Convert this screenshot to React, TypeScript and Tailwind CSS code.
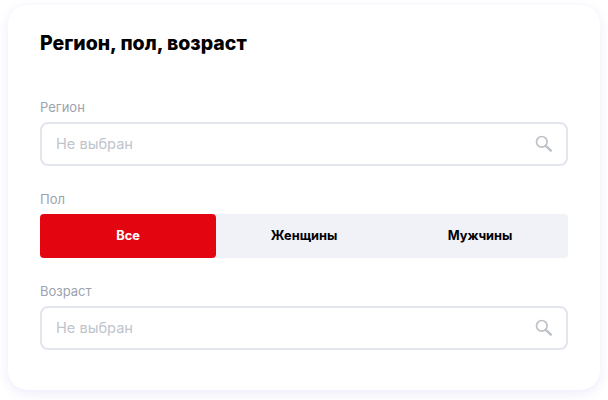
import React from 'react';

const font = "[font-family:Inter,'Noto_Sans',sans-serif]";

function SearchIcon() {
  return (
    <svg width="18" height="18" viewBox="0 0 18 18" fill="none" className="shrink-0 mr-[-1px]">
      <circle cx="6.8" cy="6.8" r="5.3" stroke="#bcc0c7" strokeWidth="1.7" />
      <path d="M10.8 10.8L16.6 16.4" stroke="#bcc0c7" strokeWidth="2.3" />
    </svg>
  );
}

function SelectField({ label }: { label: string }) {
  return (
    <div>
      <div className="text-[13px] leading-4 text-[#9ca3af] mb-[7px]">{label}</div>
      <div className="h-11 rounded-lg border-2 border-[#e3e5ec] bg-white flex items-center justify-between px-[14px]">
        <span className="text-[14.6px] text-[#c0c4cb] pt-px">Не выбран</span>
        <SearchIcon />
      </div>
    </div>
  );
}

export default function App() {
  return (
    <div className={`w-[608px] h-[400px] bg-white pt-[5px] px-2 ${font}`}>
      <div className="h-[385px] rounded-[20px] bg-white shadow-[0_3px_12px_rgba(80,90,220,0.12)] pt-[27px] px-8">
        <h2 className="text-[19.5px] leading-[22px] font-extrabold text-black">Регион, пол, возраст</h2>

        <div className="mt-[45px]">
          <SelectField label="Регион" />
        </div>

        <div className="mt-[25px]">
          <div className="text-[13px] leading-4 text-[#9ca3af] mb-[7px]">Пол</div>
          <div className="h-11 rounded bg-[#f1f2f7] grid grid-cols-3 text-[12.8px] font-bold text-black">
            <div className="rounded bg-[#e30611] text-white flex items-center justify-center">Все</div>
            <div className="flex items-center justify-center">Женщины</div>
            <div className="flex items-center justify-center">Мужчины</div>
          </div>
        </div>

        <div className="mt-[25px]">
          <SelectField label="Возраст" />
        </div>
      </div>
    </div>
  );
}
